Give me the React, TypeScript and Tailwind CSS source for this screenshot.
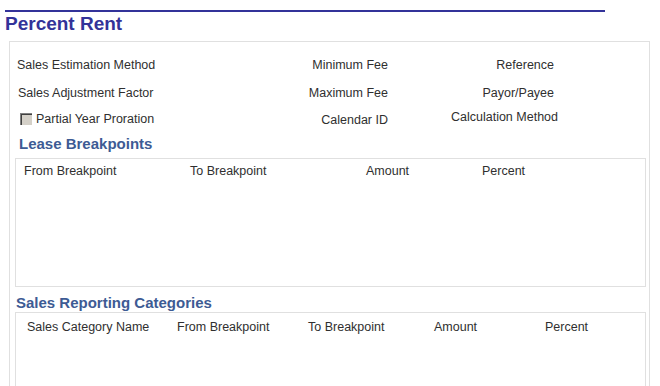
import React from 'react'

const font = { fontFamily: '"Liberation Sans", Arial, sans-serif' }

const Checkbox = () => (
    <span className="inline-block w-[12px] h-[12px] bg-[#d4d0c8] border-t border-l border-[#808080] border-b-[#e8e8e8] border-r-[#e8e8e8] shadow-[inset_1px_1px_0_#404040]" />
)

const App = () => {
    return (
        <div className="min-h-screen bg-white text-[#2f2f2f] pl-[5px] pt-[10px]" style={font}>
            <div className="w-[600px] border-t-2 border-[#333399]" />
            <h1 className="mt-[2px] text-[19px] leading-[20px] font-bold text-[#333399]">Percent Rent</h1>

            <div className="mt-[7px] ml-[4px] w-[641px] border border-[#e0e0e0] text-[12.5px] leading-[14px]">
                {/* form fields */}
                <div className="pt-[16px] pl-[7px]">
                    <div className="grid grid-cols-[283px_88px_166px] h-[28px]">
                        <span>Sales Estimation Method</span>
                        <span className="text-right">Minimum Fee</span>
                        <span className="text-right">Reference</span>
                    </div>
                    <div className="grid grid-cols-[283px_88px_166px] h-[25px]">
                        <span className="pl-[1px]">Sales Adjustment Factor</span>
                        <span className="text-right">Maximum Fee</span>
                        <span className="text-right">Payor/Payee</span>
                    </div>
                    <div className="grid grid-cols-[283px_88px_166px] h-[14px]">
                        <span className="flex items-center gap-[4px] pl-[3px]">
                            <Checkbox />
                            <span>Partial Year Proration</span>
                        </span>
                        <span className="text-right mt-[2px]">Calendar ID</span>
                        <span className="text-right -mr-[4px] -mt-[1px]">Calculation Method</span>
                    </div>
                </div>

                {/* lease breakpoints */}
                <h2 className="mt-[11px] pl-[9px] text-[15px] leading-[16px] font-bold text-[#3d5b94]">Lease Breakpoints</h2>
                <div className="mt-[6px] ml-[5px] w-[631px] h-[129px] border border-[#e0e0e0] pt-[5px] pl-[8px]">
                    <div className="grid grid-cols-[166px_176px_116px_100px]">
                        <span>From Breakpoint</span>
                        <span>To Breakpoint</span>
                        <span>Amount</span>
                        <span>Percent</span>
                    </div>
                </div>

                {/* sales reporting categories */}
                <h2 className="mt-[8px] pl-[6px] text-[15px] leading-[16px] font-bold text-[#3d5b94]">Sales Reporting Categories</h2>
                <div className="mt-[1px] ml-[5px] w-[631px] h-[100px] border border-[#e0e0e0] pt-[7px] pl-[11px]">
                    <div className="grid grid-cols-[150px_131px_126px_111px_100px]">
                        <span>Sales Category Name</span>
                        <span>From Breakpoint</span>
                        <span>To Breakpoint</span>
                        <span>Amount</span>
                        <span>Percent</span>
                    </div>
                </div>
            </div>
        </div>
    )
}

export default App
